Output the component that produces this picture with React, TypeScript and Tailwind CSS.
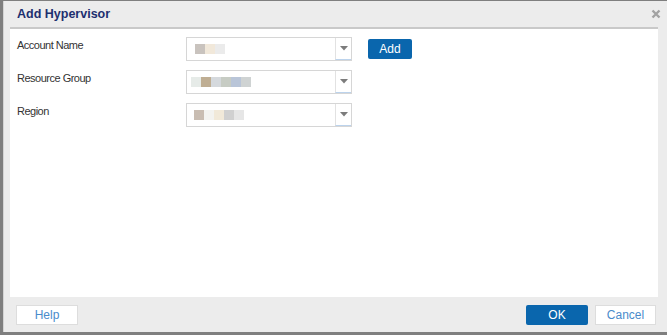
const selects = [
  { label: "Account Name", blocks: ["#c9c3be", "#f1e8da", "#ebebeb"], lead: 8, add: true },
  { label: "Resource Group", blocks: ["#e6ebe8", "#bfae93", "#d5d9dd", "#c7ccc4", "#b9c5d8", "#cfd3d3"], lead: 4, add: false },
  { label: "Region", blocks: ["#c9bdb2", "#f3f3f0", "#f1e9d9", "#d0d0d0", "#e6e6e6"], lead: 7, add: false },
];

function BlurSelect({ blocks, lead }: { blocks: string[]; lead: number }) {
  return (
    <div className="flex h-[24px] w-[166px] border border-[#d6d6d6] bg-white">
      <div className="flex flex-1 items-center" style={{ paddingLeft: lead }}>
        {blocks.map((c, i) => (
          <span key={i} className="h-[10px] w-[10px] blur-[0.6px]" style={{ backgroundColor: c }} />
        ))}
      </div>
      <div className="flex w-[16px] items-center justify-center border-l border-[#e2e2e2] border-b border-b-[#bcd3ec]">
        <svg width="8" height="5" viewBox="0 0 8 5">
          <path d="M0 0h8L4 4.5z" fill="#7c7c7c" />
        </svg>
      </div>
    </div>
  );
}

export default function App() {
  return (
    <div className="flex h-[335px] w-[667px] overflow-hidden bg-[#7f7f7f] font-['Liberation_Sans',Arial,sans-serif]">
      <div className="ml-[3px] mt-[1px] flex h-[331px] w-[664px] flex-col border-l border-[#d4d4d4] bg-[#ececec]">
        <div className="flex h-[26px] items-center justify-between pl-[13px] pr-[6px]">
          <span className="text-[12.5px] font-bold text-[#1d2f6f]">Add Hypervisor</span>
          <svg width="10" height="10" viewBox="0 0 10 10">
            <path d="M1.5 1.5l7 7M8.5 1.5l-7 7" stroke="#a2a2a2" strokeWidth="2.4" />
          </svg>
        </div>
        <div className="ml-[6px] mr-[9px] flex-1 border-t-2 border-[#c9c9c9] bg-white pl-[7px] pt-[8px]">
          <div className="flex flex-col gap-[9px]">
            {selects.map((s) => (
              <div key={s.label} className="flex items-start">
                <span className="w-[169px] text-[11px] leading-[16px] tracking-[-0.5px] text-[#333333]">{s.label}</span>
                <BlurSelect blocks={s.blocks} lead={s.lead} />
                {s.add && (
                  <button className="ml-[16px] mt-[2px] h-[20px] w-[44px] rounded-[2px] bg-[#0a66ad] text-[12px] text-white">
                    Add
                  </button>
                )}
              </div>
            ))}
          </div>
        </div>
        <div className="flex h-[35px] items-start justify-between pl-[12px] pr-[11px] pt-[8px]">
          <button className="h-[20px] w-[62px] border border-[#dddddd] bg-white text-[12px] text-[#4a8bcb]">Help</button>
          <div className="flex gap-[7px]">
            <button className="h-[20px] w-[62px] rounded-[2px] bg-[#0a66ad] text-[12px] text-white">OK</button>
            <button className="h-[20px] w-[61px] border border-[#dddddd] bg-white text-[12px] text-[#4a8bcb]">Cancel</button>
          </div>
        </div>
      </div>
    </div>
  );
}
